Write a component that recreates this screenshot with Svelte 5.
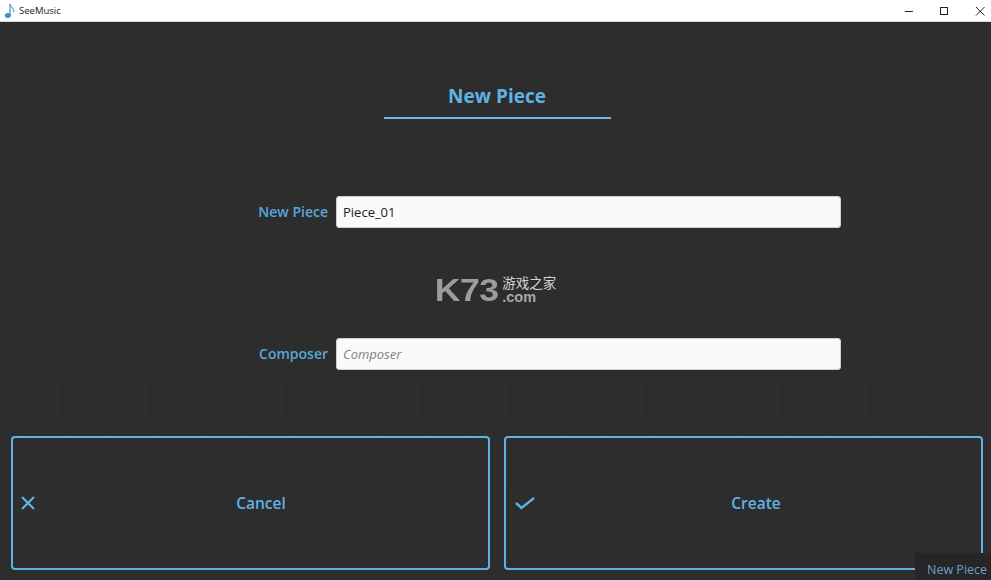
<script>
  let name = $state('Piece_01');
  let composer = $state('');
</script>

<div class="window">
  <header class="titlebar">
    <div class="app-title">
      <svg class="note" width="14" height="16" viewBox="0 0 14 16">
        <path d="M6 1 C6.5 4 10.5 5 10 9.5" fill="none" stroke="#6fb4e0" stroke-width="1.3" />
        <path d="M6 1 V12" stroke="#5a8fb8" stroke-width="1.2" />
        <ellipse cx="3.9" cy="12.5" rx="3" ry="2.4" fill="#3f8fcb" />
      </svg>
      <span>SeeMusic</span>
    </div>
    <div class="controls">
      <svg width="10" height="10" viewBox="0 0 10 10"><path d="M2 5.5 H10" stroke="#222" stroke-width="1" /></svg>
      <svg width="10" height="10" viewBox="0 0 10 10"><rect x="1.5" y="1.5" width="7" height="7" fill="none" stroke="#222" stroke-width="1" /></svg>
      <svg width="10" height="10" viewBox="0 0 10 10"><path d="M1 1 L9.5 9.5 M9.5 1 L1 9.5" stroke="#222" stroke-width="1" /></svg>
    </div>
  </header>

  <main class="content">
    <div class="stripes"></div>

    <div class="heading">
      <h1>New Piece</h1>
    </div>

    <div class="fields">
      <label class="field">
        <span>New Piece</span>
        <input bind:value={name} />
      </label>

      <div class="watermark">
        <span class="k73">K73</span>
        <div class="wm-right">
          <span class="cn">游戏之家</span>
          <span class="com">.com</span>
        </div>
      </div>

      <label class="field">
        <span>Composer</span>
        <input bind:value={composer} placeholder="Composer" />
      </label>
    </div>

    <div class="actions">
      <button class="action">
        <svg width="16" height="16" viewBox="0 0 16 16"><path d="M2 2 L14 14 M14 2 L2 14" stroke="#5db4e8" stroke-width="2.2" fill="none" /></svg>
        <span>Cancel</span>
      </button>
      <button class="action">
        <svg class="check" width="20" height="16" viewBox="0 0 20 16"><path d="M3 8 L8.5 13 L21 3" stroke="#5db4e8" stroke-width="2.4" fill="none" /></svg>
        <span>Create</span>
      </button>
    </div>
  </main>

  <div class="tooltip">New Piece</div>
</div>

<style>
  :global(body) {
    background: #2d2d2d;
  }
  .window {
    position: relative;
    width: 991px;
    height: 580px;
    overflow: hidden;
    display: flex;
    flex-direction: column;
    font-family: "Open Sans", "Noto Sans", sans-serif;
    background: #2d2d2d;
  }
  .titlebar {
    height: 21px;
    flex: none;
    background: #fff;
    border-bottom: 1px solid #d8d8d8;
    display: flex;
    justify-content: space-between;
    align-items: center;
  }
  .app-title {
    display: flex;
    align-items: center;
    padding-left: 4px;
    gap: 1px;
    font-size: 9.5px;
    color: #222;
  }
  .controls {
    display: flex;
    gap: 26px;
    padding-right: 6px;
  }
  .content {
    position: relative;
    flex: 1;
    display: flex;
    flex-direction: column;
    min-height: 0;
  }
  /* faint piano-roll bars behind the form */
  .stripes {
    position: absolute;
    left: 0;
    right: 0;
    top: 325px;
    height: 150px;
    background: repeating-linear-gradient(90deg, rgba(255, 255, 255, 0.006) 0 14px, rgba(0, 0, 0, 0.014) 14px 28px, rgba(255, 255, 255, 0) 28px 45px);
    mask-image: linear-gradient(180deg, transparent, #000 30%, transparent);
  }
  .heading {
    position: relative;
    align-self: center;
    width: 227px;
    margin: 60px 0 0 3px;
    border-bottom: 2px solid #6cb6e2;
    padding-bottom: 7px;
    text-align: center;
  }
  h1 {
    margin: 0;
    font-size: 19px;
    line-height: 28px;
    font-weight: 700;
    color: #5fb3e6;
  }
  .fields {
    position: relative;
    margin-top: 77px;
    display: flex;
    flex-direction: column;
  }
  .field {
    display: flex;
    align-items: center;
    gap: 8px;
  }
  .field span {
    width: 328px;
    margin-bottom: 2px;
    text-align: right;
    font-size: 14px;
    font-weight: 600;
    color: #57a8da;
  }
  input {
    box-sizing: border-box;
    width: 505px;
    height: 32px;
    border: 1px solid #cfcfcf;
    border-radius: 3px;
    background: #fafafa;
    padding: 0 6px;
    font-family: inherit;
    font-size: 13px;
    color: #222;
    outline: none;
  }
  input::placeholder {
    font-style: italic;
    color: #808080;
  }
  .watermark {
    box-sizing: border-box;
    height: 110px;
    padding-top: 14px;
    display: flex;
    align-items: center;
    justify-content: center;
    gap: 2px;
    margin-left: -2px;
  }
  .k73 {
    font-family: "Liberation Sans", sans-serif;
    font-weight: 700;
    font-size: 31px;
    line-height: 26px;
    letter-spacing: -0.5px;
    transform: scaleX(1.15);
    margin: 2px 6px 0;
    color: #9c9c9c;
  }
  .wm-right {
    display: flex;
    flex-direction: column;
    align-items: flex-start;
    margin-bottom: 2px;
  }
  .cn {
    font-family: "Noto Sans CJK SC", sans-serif;
    font-size: 13.5px;
    line-height: 15px;
    color: #d4d4d4;
  }
  .com {
    font-family: "Liberation Sans", sans-serif;
    font-size: 14.5px;
    line-height: 14px;
    font-weight: 700;
    color: #a6a6a6;
  }
  .actions {
    position: relative;
    margin: 66px 8px 0 11px;
    display: flex;
    gap: 14px;
  }
  .action {
    flex: 1;
    height: 134px;
    box-sizing: border-box;
    border: 2px solid #5fb2e4;
    border-radius: 4px;
    background: transparent;
    display: flex;
    align-items: center;
    padding: 0 7px;
    font-family: inherit;
    font-size: 15.5px;
    font-weight: 600;
    color: #5fb3e6;
  }
  .check {
    overflow: visible;
  }
  .action span {
    flex: 1;
    text-align: center;
    padding-left: 5px;
  }
  .tooltip {
    position: absolute;
    right: 0;
    bottom: 0;
    width: 76px;
    height: 27px;
    box-sizing: border-box;
    background: #262626;
    border-top-left-radius: 3px;
    color: #6f9fc4;
    font-size: 12.5px;
    padding: 8px 0 0 12px;
    line-height: 18px;
    white-space: nowrap;
  }
</style>
